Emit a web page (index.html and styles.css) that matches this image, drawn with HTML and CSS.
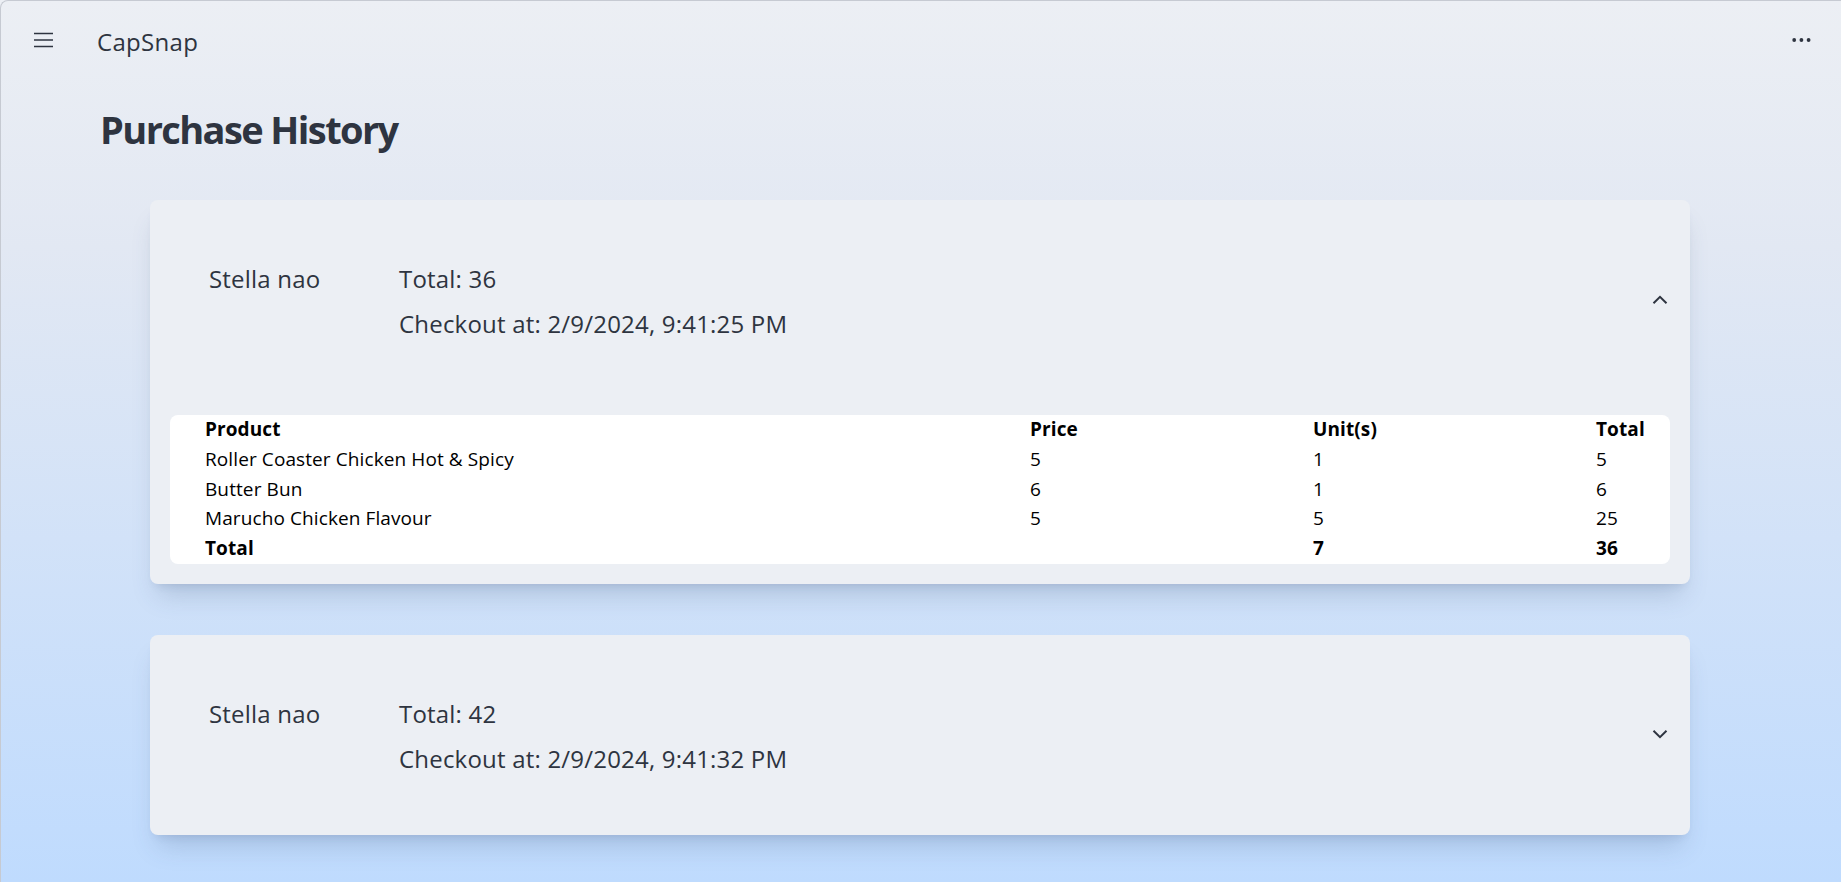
FILE: index.html
```html
<!DOCTYPE html>
<html lang="en">
<head>
<meta charset="utf-8">
<title>CapSnap</title>
<link rel="stylesheet" href="styles.css">
</head>
<body>
<div class="app">
  <header class="topbar">
    <button class="icon-btn menu-btn" aria-label="Menu">
      <svg width="19" height="16" viewBox="0 0 19 16" aria-hidden="true">
        <path d="M0 1.5H19M0 8H19M0 14.5H19" stroke="#2e3440" stroke-width="1.7" fill="none"/>
      </svg>
    </button>
    <span class="app-title">CapSnap</span>
    <button class="icon-btn more-btn" aria-label="More">
      <svg width="20" height="4" viewBox="0 0 20 4" aria-hidden="true">
        <circle cx="2.2" cy="2" r="1.9" fill="#2e3440"/>
        <circle cx="9.4" cy="2" r="1.9" fill="#2e3440"/>
        <circle cx="16.6" cy="2" r="1.9" fill="#2e3440"/>
      </svg>
    </button>
  </header>

  <main class="content">
    <h1 class="page-title">Purchase History</h1>

    <section class="orders">
      <article class="order-card">
        <div class="order-header">
          <div class="summary">
            <div class="customer">Stella nao</div>
            <div class="details">
              <div>Total: 36</div>
              <div>Checkout at: 2/9/2024, 9:41:25 PM</div>
            </div>
          </div>
          <svg class="chevron" width="16" height="10" viewBox="0 0 16 10" aria-hidden="true">
            <polyline points="1.5,8.2 8,1.8 14.5,8.2" fill="none" stroke="#2e3440" stroke-width="2"/>
          </svg>
        </div>
        <div class="items">
          <table class="items-table">
            <colgroup>
              <col class="c-product"><col class="c-price"><col class="c-units"><col class="c-total">
            </colgroup>
            <thead>
              <tr><th>Product</th><th>Price</th><th>Unit(s)</th><th>Total</th></tr>
            </thead>
            <tbody>
              <tr><td>Roller Coaster Chicken Hot &amp; Spicy</td><td>5</td><td>1</td><td>5</td></tr>
              <tr><td>Butter Bun</td><td>6</td><td>1</td><td>6</td></tr>
              <tr><td>Marucho Chicken Flavour</td><td>5</td><td>5</td><td>25</td></tr>
            </tbody>
            <tfoot>
              <tr><th>Total</th><th></th><th>7</th><th>36</th></tr>
            </tfoot>
          </table>
        </div>
      </article>

      <article class="order-card">
        <div class="order-header">
          <div class="summary">
            <div class="customer">Stella nao</div>
            <div class="details">
              <div>Total: 42</div>
              <div>Checkout at: 2/9/2024, 9:41:32 PM</div>
            </div>
          </div>
          <svg class="chevron" width="16" height="10" viewBox="0 0 16 10" aria-hidden="true">
            <polyline points="1.5,1.8 8,8.2 14.5,1.8" fill="none" stroke="#2e3440" stroke-width="2"/>
          </svg>
        </div>
      </article>
    </section>
  </main>
</div>
</body>
</html>
```
FILE: styles.css
```css
* { box-sizing: border-box; }

html, body {
  margin: 0;
  height: 100%;
}

body {
  font-family: "Open Sans", "Noto Sans", "Liberation Sans", sans-serif;
  color: #2e3440;
  background: linear-gradient(180deg, #eceff4 0%, #e2e8f3 28%, #bfdbfe 100%);
  overflow: hidden;
}

.app {
  height: 100%;
  border-top: 1px solid #c6cad2;
  border-left: 1px solid #c6cad2;
  border-top-left-radius: 8px;
}

.topbar {
  display: flex;
  align-items: center;
  height: 82px;
  padding: 0 29px 0 33px;
}

.icon-btn {
  background: none;
  border: 0;
  padding: 0;
  display: flex;
  cursor: pointer;
}

.menu-btn { margin-bottom: 4px; }

.app-title {
  margin-left: 44px;
  font-size: 24px;
  line-height: 32px;
  font-weight: 500;
  letter-spacing: 0.3px;
  color: #2e3440;
}

.more-btn {
  margin-left: auto;
  margin-bottom: 3.4px;
}

.content {
  padding-left: 99px;
}

.page-title {
  margin: 22px 0 0 0;
  font-size: 38px;
  line-height: 48px;
  font-weight: 700;
  letter-spacing: -1.6px;
  color: #2e3440;
}

.orders {
  margin-top: 47px;
  margin-left: 50px;
  width: 1540px;
  display: flex;
  flex-direction: column;
  gap: 51px;
}

.order-card {
  background: #eceff4;
  border-radius: 8px;
  box-shadow: 0 18px 24px -8px rgba(60, 80, 120, 0.22), 0 6px 10px -6px rgba(60, 80, 120, 0.18);
}

.order-card:first-child {
  padding-bottom: 20px;
}

.order-header {
  height: 200px;
  display: flex;
  align-items: center;
  padding: 0 22px 0 59px;
}

.summary {
  display: flex;
  align-items: flex-start;
  padding-top: 2px;
  font-size: 24px;
  line-height: 45px;
  font-weight: 500;
  letter-spacing: 0.2px;
}

.customer {
  width: 190px;
}

.chevron {
  margin-left: auto;
  margin-bottom: 1px;
}

.items {
  margin: 15px 20px 0 20px;
  background: #ffffff;
  border-radius: 8px;
}

.items-table {
  width: 100%;
  border-collapse: collapse;
  table-layout: fixed;
  font-size: 19px;
  line-height: 29.8px;
  letter-spacing: 0.1px;
  color: #000;
}

.c-product { width: 860px; }
.c-price { width: 283px; }
.c-units { width: 283px; }
.c-total { width: 74px; }

.items-table th,
.items-table td {
  padding: 0;
  text-align: left;
  white-space: nowrap;
}

.items-table th { font-weight: 700; }

.items-table th:first-child,
.items-table td:first-child {
  padding-left: 35px;
}
```
